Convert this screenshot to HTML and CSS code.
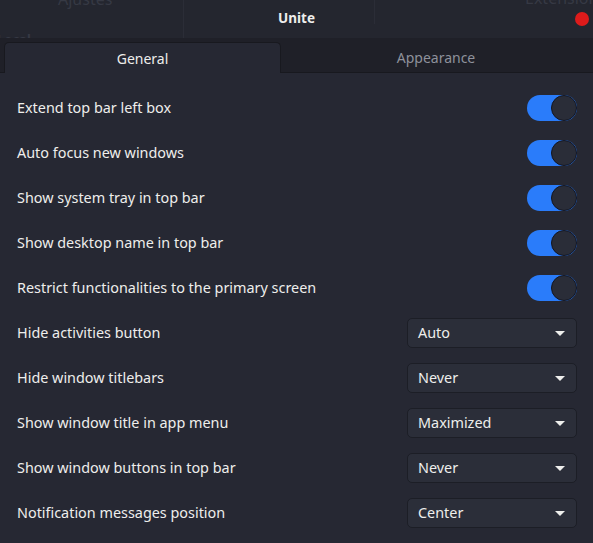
FILE: index.html
```html
<!DOCTYPE html>
<html>
<head>
<meta charset="utf-8">
<link rel="stylesheet" href="styles.css">
</head>
<body>
<div class="window">
  <header class="titlebar">
    <div class="ghost">
      <span class="ghost-ajustes">Ajustes</span>
      <span class="ghost-ext">Extensiones</span>
      <span class="ghost-local">Local</span>
      <span class="ghost-sep ghost-sep1"></span>
      <span class="ghost-sep ghost-sep2"></span>
    </div>
    <div class="title">Unite</div>
    <span class="close"></span>
  </header>
  <nav class="tabs">
    <div class="tab active">General</div>
    <div class="tab">Appearance</div>
  </nav>
  <main class="content">
    <div class="row"><span class="label">Extend top bar left box</span><span class="switch"><span class="knob"></span></span></div>
    <div class="row"><span class="label">Auto focus new windows</span><span class="switch"><span class="knob"></span></span></div>
    <div class="row"><span class="label">Show system tray in top bar</span><span class="switch"><span class="knob"></span></span></div>
    <div class="row"><span class="label">Show desktop name in top bar</span><span class="switch"><span class="knob"></span></span></div>
    <div class="row"><span class="label">Restrict functionalities to the primary screen</span><span class="switch"><span class="knob"></span></span></div>
    <div class="row"><span class="label">Hide activities button</span><span class="combo"><span class="value">Auto</span><span class="arrow"></span></span></div>
    <div class="row"><span class="label">Hide window titlebars</span><span class="combo"><span class="value">Never</span><span class="arrow"></span></span></div>
    <div class="row"><span class="label">Show window title in app menu</span><span class="combo"><span class="value">Maximized</span><span class="arrow"></span></span></div>
    <div class="row"><span class="label">Show window buttons in top bar</span><span class="combo"><span class="value">Never</span><span class="arrow"></span></span></div>
    <div class="row"><span class="label">Notification messages position</span><span class="combo"><span class="value">Center</span><span class="arrow"></span></span></div>
  </main>
</div>
</body>
</html>
```
FILE: styles.css
```css
html, body {
  margin: 0;
  padding: 0;
  background: #262833;
}
body {
  font-family: "Noto Sans", "DejaVu Sans", sans-serif;
  font-size: 14.4px;
  color: #eeeeec;
}
.window {
  width: 593px;
  height: 543px;
  overflow: hidden;
  display: flex;
  flex-direction: column;
}
.titlebar {
  position: relative;
  height: 38px;
  flex: none;
  background: #24262f;
  display: flex;
  align-items: center;
  justify-content: center;
  overflow: hidden;
}
.ghost {
  position: absolute;
  inset: 0;
  color: #363944;
}
.ghost-ajustes {
  position: absolute;
  left: 58px;
  top: -12px;
  font-size: 16px;
}
.ghost-ext {
  position: absolute;
  left: 525px;
  top: -13px;
  font-size: 16px;
}
.ghost-local {
  position: absolute;
  left: -3px;
  top: 30px;
  font-size: 13px;
  font-weight: bold;
}
.ghost-sep {
  position: absolute;
  top: 0;
  width: 1px;
  height: 24px;
  background: #2b2d37;
}
.ghost-sep1 { left: 183px; height: 38px; }
.ghost-sep2 { left: 374px; }
.title {
  position: relative;
  top: -1px;
  font-weight: bold;
  font-size: 13.5px;
  color: #eeeeec;
}
.close {
  position: absolute;
  right: 4px;
  top: 12px;
  width: 14px;
  height: 14px;
  border-radius: 50%;
  background: #dd1b1b;
}
.tabs {
  flex: none;
  display: flex;
  height: 30px;
  padding: 4px 2px 0 4px;
  background: #1f2028;
  border-bottom: 1px solid #18191f;
}
.tab {
  flex: 1;
  display: flex;
  align-items: center;
  justify-content: center;
  color: #8e919b;
  font-size: 14px;
}
.tab.active {
  flex: none;
  width: 275px;
  background: #262833;
  color: #eeeeec;
  border: 1px solid #18191f;
  border-bottom: none;
  border-radius: 5px 5px 0 0;
  margin-bottom: -1px;
}
.content {
  flex: 1;
  padding: 12px 16px 0 17px;
  display: flex;
  flex-direction: column;
}
.row {
  height: 45px;
  display: flex;
  align-items: center;
  justify-content: space-between;
}
.switch {
  position: relative;
  width: 50px;
  height: 26px;
  border-radius: 13px;
  background: #2a7cfa;
}
.knob {
  position: absolute;
  right: 0;
  top: 0;
  width: 24px;
  height: 24px;
  border-radius: 50%;
  background: #2a2d38;
  border: 1px solid #131520;
}
.combo {
  width: 168px;
  height: 28px;
  box-sizing: content-box;
  border: 1px solid #1c1e26;
  border-radius: 5px;
  background: #2b2e39;
  display: flex;
  align-items: center;
  justify-content: space-between;
  padding: 0;
}
.value {
  padding-left: 10px;
}
.arrow {
  width: 0;
  height: 0;
  margin-right: 11px;
  margin-top: 2px;
  border-left: 5px solid transparent;
  border-right: 5px solid transparent;
  border-top: 5px solid #eeeeec;
}
```
